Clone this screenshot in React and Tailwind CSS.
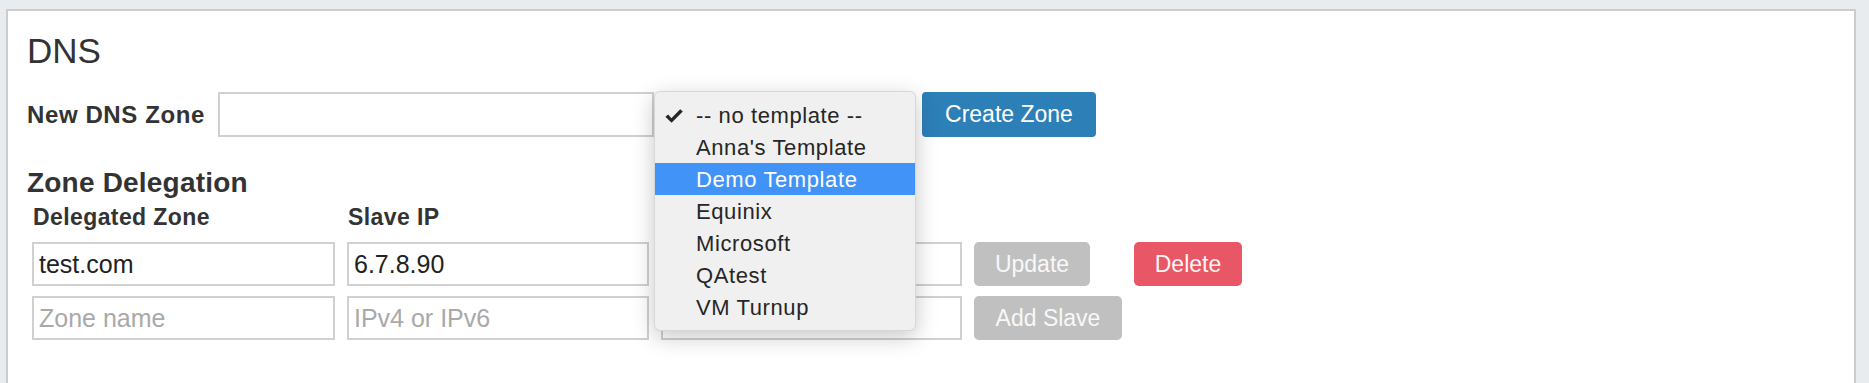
import React from "react";

const templates = [
  "-- no template --",
  "Anna's Template",
  "Demo Template",
  "Equinix",
  "Microsoft",
  "QAtest",
  "VM Turnup",
];

const CheckMark = () => (
  <svg width="18" height="14" viewBox="0 0 18 14" className="text-[#262626]">
    <path d="M0.4 7.8 L3.2 5.4 L6.4 9.2 L15.2 0.2 L17.8 2.4 L6.6 13.8 Z" fill="currentColor" />
  </svg>
);

const TemplateMenu = () => (
  <div className="absolute left-[646px] top-[80px] h-[240px] w-[262px] rounded-[6px] border border-black/10 bg-[#f0f0f0] pt-[7px] shadow-[0_6px_22px_rgba(0,0,0,0.22)]">
    {templates.map((t, i) => (
      <div
        key={t}
        className={
          i === 2
            ? "relative flex h-[32px] items-center bg-[#4193f7] pl-[41px] text-[22px] tracking-[0.6px] text-white"
            : "relative flex h-[32px] items-center pl-[41px] text-[22px] tracking-[0.6px] text-[#262626]"
        }
      >
        {i === 0 && (
          <span className="absolute left-[10px] top-[10px]">
            <CheckMark />
          </span>
        )}
        {t}
      </div>
    ))}
  </div>
);

const TextField = ({ value, placeholder }) => (
  <input
    defaultValue={value}
    placeholder={placeholder}
    className="h-[44px] w-full border-2 border-[#d0d0d0] bg-white px-[5px] text-[25px] text-[#222] outline-none placeholder:text-[#a9a9a9]"
  />
);

export default function App() {
  return (
    <div className="min-h-screen bg-[#e9ecef] pl-[6px] pr-[13px] pt-[9px] font-['Liberation_Sans',Arial,sans-serif] text-[#333]">
      <div className="relative h-[374px] border-2 border-b-0 border-[#cccccc] bg-white pl-[19px] pt-[22px]">
        <h1 className="text-[35px] font-normal leading-[35px]">DNS</h1>

        {/* new zone */}
        <div className="mt-[24px] flex h-[45px] items-center">
          <span className="w-[191px] text-[24px] font-bold tracking-[0.6px]">New DNS Zone</span>
          <input className="h-[45px] w-[436px] border-2 border-[#d0d0d0] bg-white outline-none" />
          <div className="h-[45px] w-[260px]" />
          <button className="ml-[8px] h-[45px] w-[174px] rounded-[4px] bg-[#2d7fb8] text-[23px] text-white">
            Create Zone
          </button>
        </div>

        {/* delegation */}
        <h2 className="mt-[32px] text-[28px] font-bold leading-[27px] tracking-[0.2px]">Zone Delegation</h2>
        <div className="ml-[5px]">
          <div className="mt-[10px] grid grid-cols-[303px_302px_301px_148px_108px] gap-x-[12px] text-[23px] font-bold leading-[23px] tracking-[0.4px]">
            <span className="pl-[1px]">Delegated Zone</span>
            <span className="pl-[1px]">Slave IP</span>
          </div>
          <div className="mt-[13px] grid grid-cols-[303px_302px_301px_148px_108px] gap-x-[12px] gap-y-[10px]">
            <TextField value="test.com" />
            <TextField value="6.7.8.90" />
            <TextField />
            <button className="h-[44px] w-[116px] rounded-[5px] bg-[#c0c0c0] text-[23px] text-[#f8f8f8]">Update</button>
            <button className="h-[44px] w-[108px] rounded-[5px] bg-[#e95666] text-[23px] text-[#fff4f5]">Delete</button>
            <TextField placeholder="Zone name" />
            <TextField placeholder="IPv4 or IPv6" />
            <TextField />
            <button className="h-[44px] w-[148px] rounded-[5px] bg-[#c0c0c0] text-[23px] text-[#f8f8f8]">Add Slave</button>
          </div>
        </div>

        <TemplateMenu />
      </div>
    </div>
  );
}
